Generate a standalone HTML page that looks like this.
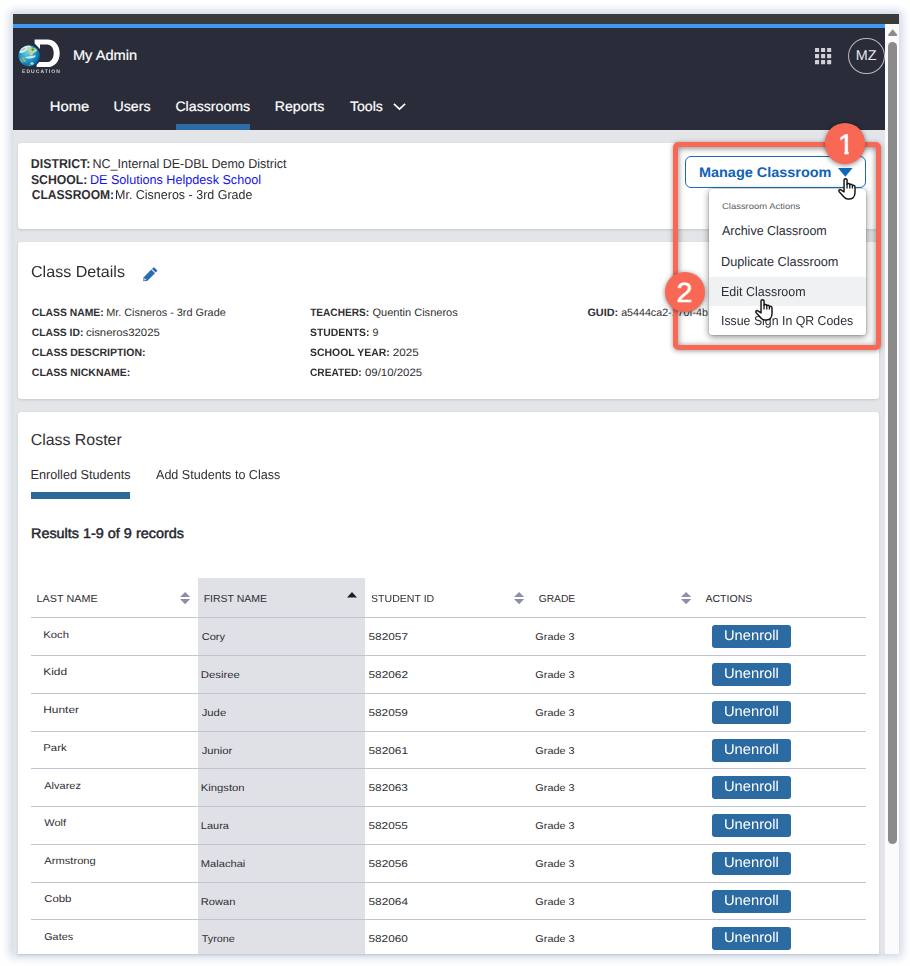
<!DOCTYPE html>
<html lang="en">
<head>
<meta charset="utf-8">
<title>My Admin - Classrooms</title>
<style>
*{box-sizing:border-box;margin:0;padding:0}
html,body{width:910px;height:966px;overflow:hidden;background:#fff}
body{position:relative;font-family:"Liberation Sans",Arial,sans-serif;color:#2f2f33}
.abs,.t,.layer{position:absolute}
.layer{left:0;top:0}
.t{white-space:pre;line-height:1;text-rendering:geometricPrecision;transform-origin:0 0;font-weight:400;text-decoration:none;font-style:normal;list-style:none;display:block}
#frame{position:absolute;left:13px;top:14px;width:886px;height:940px;background:#e3e5e9;box-shadow:0 0 9px 3px rgba(160,178,208,.55)}
#topbar{position:absolute;left:13px;top:14px;width:886px;height:10px;background:#3a3a3a}
#loader{position:absolute;left:13px;top:24px;width:872px;height:4px;background:#3d9af3}
#nav{position:absolute;left:13px;top:28px;width:872px;height:102px;background:#2a2d39}
#track{position:absolute;left:885px;top:24px;width:14px;height:930px;background:#fbfbfb}
#thumb{position:absolute;left:888px;top:42px;width:9px;height:802px;border-radius:4.5px;background:#8b8b8b}
.card{position:absolute;left:18px;width:861px;background:#fff;border-radius:3px;box-shadow:0 1px 3px rgba(0,0,0,.13)}
#active{position:absolute;left:176px;top:124px;width:74px;height:6px;background:#2d6ca5}
#avatar{position:absolute;left:847.8px;top:37.8px;width:37px;height:36.6px;border-radius:50%;border:1.1px solid #b9bac2}
#tabline{position:absolute;left:31px;top:491.6px;width:99.2px;height:7.4px;background:#2c689c}
#hl{position:absolute;left:198px;top:578px;width:167px;height:376px;background:#e0e1e7}
.line{position:absolute;left:31px;width:835px;height:1px;background:#c3c4d2}
.btn{position:absolute;left:711.7px;width:79.3px;height:23px;border-radius:3px;background:#2c6aa2}
#manage{position:absolute;left:685px;top:156px;width:181px;height:32px;border:1.3px solid #1b6cb8;border-radius:6px;background:#fff}
#menu{position:absolute;left:709px;top:189px;width:157px;height:146px;background:#fff;border-radius:3px;box-shadow:0 2px 7px rgba(0,0,0,.45), 0 0 0 .5px rgba(120,120,150,.3)}
#menuhl{position:absolute;left:709px;top:277.3px;width:157px;height:28.3px;background:#f0f1f3}
#redbox{position:absolute;left:673.1px;top:142px;width:208px;height:207.7px;border:5.2px solid #f96855;border-radius:5px;box-shadow:0 1px 5px rgba(0,0,0,.38), inset 0 1px 6px rgba(0,0,0,.5)}
.badge{position:absolute;width:40.4px;height:40.2px;border-radius:50%;background:#f96855;box-shadow:0 1px 5px rgba(0,0,0,.5)}
.num{color:#fff;-webkit-text-stroke:0.5px #fff}
.w{-webkit-text-stroke:0.2px #fff}
.sb{-webkit-text-stroke:0.45px #23242c}
svg{position:absolute;overflow:visible}
</style>
</head>
<body>
<div id="frame"></div>
<div id="topbar"></div>
<div id="loader"></div>
<header class="layer">
<div id="nav"></div>
<svg id="logo" style="left:14px;top:34px" width="52" height="46" viewBox="14 34 52 46">
<defs>
<radialGradient id="gl" cx="0.40" cy="0.36" r="0.68">
<stop offset="0" stop-color="#6fcdea"/><stop offset="0.45" stop-color="#239fd3"/><stop offset="0.8" stop-color="#0f78b4"/><stop offset="1" stop-color="#0a4f8a"/>
</radialGradient>
<clipPath id="gc"><circle cx="29.15" cy="55.85" r="10.65"/></clipPath>
<filter id="gb" x="-20%" y="-20%" width="140%" height="140%"><feGaussianBlur stdDeviation="0.55"/></filter>
</defs>
<path d="M34.6 39.4 H47.5 C54.8 39.4 59.7 45.3 59.7 53.2 C59.7 61.2 54.8 67.1 47.5 67.1 H36.6 V62 H47 C51.2 62 53.7 58.2 53.7 53.2 C53.7 48.3 51.2 44.6 47 44.6 H40 V49 L34.6 43.5 Z" fill="#fff"/>
<circle cx="29.15" cy="55.85" r="11.7" fill="#2a2d39"/>
<circle cx="29.15" cy="55.85" r="10.65" fill="url(#gl)"/>
<g clip-path="url(#gc)" filter="url(#gb)">
<path d="M19 52.5 C20 48.5 23.5 46.2 27.5 45.6 C29.5 45.4 31 46 31.5 47 C29 48.5 27 50.5 24.5 52 C22.5 53 20.5 53.3 19 52.5 Z" fill="#e4f3f7" opacity=".9"/>
<path d="M27.5 47.5 C29.5 46.6 32 46.8 33.5 48 C35.3 48.2 36.8 49.3 37.2 50.8 C36 52 34.3 52.6 33.2 53.8 C32.6 55 31.4 56 30 55.6 C29.2 54.4 29.6 53 28.6 52 C27.6 51 26.6 49 27.5 47.5 Z" fill="#bcd79c"/>
<ellipse cx="32.7" cy="49.6" rx="1.3" ry="1.1" fill="#2f8a4a"/>
<path d="M21.5 50.2 C22.8 48.6 24.6 48 26 48.3 C25 49.6 23.4 50.6 21.8 51 Z" fill="#9cc67e" opacity=".85"/>
<path d="M24.5 57.6 C27.5 56.2 31.5 56.2 35.5 55.2 C36.2 56.4 34.5 57.6 32 58.2 C29.5 58.8 26.5 58.8 24.5 57.6 Z" fill="#e6f4fa" opacity=".85"/>
<path d="M21.8 56.6 C23.6 57 25.4 59 26.3 61.6 C25.6 62.6 24 62.3 22.8 60.8 C21.8 59.6 21.2 57.8 21.8 56.6 Z" fill="#8fb666"/>
<path d="M20.6 58.5 C21.4 60.5 22.6 62.2 24 63 C22.6 63 21 61.6 20.2 59.8 Z" fill="#d8ecf0" opacity=".8"/>
<ellipse cx="32" cy="63.6" rx="1.7" ry="1.3" fill="#d6efe6" opacity=".85"/>
<ellipse cx="29.6" cy="65.3" rx="1.6" ry=".8" fill="#6faa6a" opacity=".8"/>
</g>
</svg>
<span class="t" style="left:21px;top:70px;font-size:5.0px;font-weight:700;transform:translateX(1.0px);letter-spacing:1.06px;color:#d2d3d8;will-change:transform;">EDUCATION</span>
<div class="t w" style="left:72px;top:48px;font-size:14.0px;transform:translateX(0.89px) scaleX(1.044);color:#fff;">My Admin</div>
<svg id="apps" style="left:814.9px;top:47.9px" width="16.4" height="16.4" viewBox="0 0 16.4 16.4" fill="#d0d1d8"><rect x="0.00" y="0.00" width="4.1" height="4.1" rx=".3"/><rect x="6.05" y="0.00" width="4.1" height="4.1" rx=".3"/><rect x="12.10" y="0.00" width="4.1" height="4.1" rx=".3"/><rect x="0.00" y="6.05" width="4.1" height="4.1" rx=".3"/><rect x="6.05" y="6.05" width="4.1" height="4.1" rx=".3"/><rect x="12.10" y="6.05" width="4.1" height="4.1" rx=".3"/><rect x="0.00" y="12.10" width="4.1" height="4.1" rx=".3"/><rect x="6.05" y="12.10" width="4.1" height="4.1" rx=".3"/><rect x="12.10" y="12.10" width="4.1" height="4.1" rx=".3"/></svg>
<div id="avatar"></div><span class="t" style="left:855px;top:49px;font-size:14.3px;transform:translateX(0.83px) scaleX(1.006);color:#e8e8ee;">MZ</span>
<nav class="layer">
<a class="t w" style="left:49px;top:100px;font-size:13.7px;transform:translateX(0.79px) scaleX(1.08);color:#fff;">Home</a>
<a class="t w" style="left:113px;top:100px;font-size:13.7px;transform:translateX(0.53px) scaleX(1.035);color:#fff;">Users</a>
<a class="t w" style="left:175px;top:100px;font-size:13.7px;transform:translateX(0.38px) scaleX(1.035);color:#fff;">Classrooms</a>
<a class="t w" style="left:274px;top:100px;font-size:13.7px;transform:translateX(0.7px) scaleX(1.037);color:#fff;">Reports</a>
<a class="t w" style="left:349px;top:100px;font-size:13.7px;transform:translateX(0.94px) scaleX(1.032);color:#fff;">Tools</a>
<svg style="left:393px;top:103.2px" width="13" height="7.4" viewBox="0 0 13 7.4"><path d="M0.9 0.9 L6.5 6.2 L12.1 0.9" fill="none" stroke="#fff" stroke-width="1.7"/></svg>
<div id="active"></div>
</nav>
</header>
<main class="layer">
<section class="card" style="top:143px;height:86px"></section>
<section class="layer">
<b class="t" style="left:30px;top:158px;font-size:12.9px;font-weight:700;transform:translateX(0.87px) scaleX(0.955);color:#2f2f33;">DISTRICT:</b>
<span class="t" style="left:92px;top:158px;font-size:12.9px;transform:translateX(0.51px) scaleX(0.969);color:#2f2f33;">NC_Internal DE-DBL Demo District</span>
<b class="t" style="left:30px;top:174px;font-size:12.9px;font-weight:700;transform:translateX(0.88px) scaleX(0.95);color:#2f2f33;">SCHOOL:</b>
<a class="t" style="left:89px;top:174px;font-size:12.9px;transform:translateX(0.88px) scaleX(0.979);color:#1414e6;">DE Solutions Helpdesk School</a>
<b class="t" style="left:31px;top:189px;font-size:12.9px;font-weight:700;transform:translateX(0.78px) scaleX(0.935);color:#2f2f33;">CLASSROOM:</b>
<span class="t" style="left:115px;top:189px;font-size:12.9px;transform:scaleX(0.969);color:#2f2f33;">Mr. Cisneros - 3rd Grade</span>
<button id="manage" type="button"></button>
<span class="t" style="left:698px;top:165px;font-size:14.0px;font-weight:700;transform:translateX(0.97px) scaleX(1.032);color:#0f62b4;">Manage Classroom</span>
<svg style="left:837.9px;top:168.2px" width="14.6" height="8.8" viewBox="0 0 14.6 8.8"><path d="M0 0 H14.6 L7.3 8.8 Z" fill="#1168c0"/></svg>
</section>
<section class="card" style="top:242px;height:156.5px"></section>
<section class="layer">
<h2 class="t" style="left:31px;top:265px;font-size:15.9px;transform:scaleX(1.013);color:#2f2f33;">Class Details</h2>
<svg style="left:142.6px;top:266.8px" width="14.6" height="14.6" viewBox="0 0 14.6 14.6">
<path d="M0.3 14.3 L0.5 10.4 L8.3 2.6 L12.0 6.3 L4.2 14.1 Z" fill="#2b6cb0"/>
<path d="M9.0 1.9 L10.5 0.4 Q10.9 0 11.3 0.4 L14.2 3.3 Q14.5 3.7 14.2 4.1 L12.7 5.6 Z" fill="#2b6cb0"/>
<path d="M1.5 11.0 L3.6 13.1 L1.1 13.6 Z" fill="#d5e3f2"/>
</svg>
<b class="t" style="left:31px;top:308px;font-size:10.7px;font-weight:700;transform:translateX(0.81px) scaleX(0.969);color:#2f2f33;">CLASS NAME:</b>
<span class="t" style="left:106px;top:308px;font-size:10.7px;transform:translateX(0.13px) scaleX(1.017);color:#2f2f33;">Mr. Cisneros - 3rd Grade</span>
<b class="t" style="left:31px;top:328px;font-size:10.7px;font-weight:700;transform:translateX(0.81px) scaleX(0.964);color:#2f2f33;">CLASS ID:</b>
<span class="t" style="left:85px;top:328px;font-size:10.7px;transform:translateX(0.95px) scaleX(1.062);color:#2f2f33;">cisneros32025</span>
<b class="t" style="left:31px;top:348px;font-size:10.7px;font-weight:700;transform:translateX(0.81px) scaleX(0.982);color:#2f2f33;">CLASS DESCRIPTION:</b>
<b class="t" style="left:31px;top:368px;font-size:10.7px;font-weight:700;transform:translateX(0.81px) scaleX(0.981);color:#2f2f33;">CLASS NICKNAME:</b>
<b class="t" style="left:310px;top:308px;font-size:10.7px;font-weight:700;transform:translateX(0.17px) scaleX(0.944);color:#2f2f33;">TEACHERS:</b>
<span class="t" style="left:372px;top:308px;font-size:10.7px;transform:translateX(0.39px) scaleX(1.034);color:#2f2f33;">Quentin Cisneros</span>
<b class="t" style="left:310px;top:328px;font-size:10.7px;font-weight:700;transform:scaleX(0.973);color:#2f2f33;">STUDENTS:</b>
<span class="t" style="left:372px;top:328px;font-size:10.7px;transform:translateX(0.39px);color:#2f2f33;">9</span>
<b class="t" style="left:310px;top:348px;font-size:10.7px;font-weight:700;transform:scaleX(0.978);color:#2f2f33;">SCHOOL YEAR:</b>
<span class="t" style="left:392px;top:348px;font-size:10.7px;transform:translateX(0.85px) scaleX(1.093);color:#2f2f33;">2025</span>
<b class="t" style="left:310px;top:368px;font-size:10.7px;font-weight:700;transform:scaleX(0.95);color:#2f2f33;">CREATED:</b>
<span class="t" style="left:364px;top:368px;font-size:10.7px;transform:translateX(0.92px) scaleX(1.07);color:#2f2f33;">09/10/2025</span>
<b class="t" style="left:587px;top:308px;font-size:10.7px;font-weight:700;transform:translateX(0.4px) scaleX(1.018);color:#2f2f33;">GUID:</b>
<span class="t" style="left:621px;top:308px;font-size:10.7px;transform:translateX(0.13px);color:#2f2f33;">a5444ca2-170f-4b</span>
</section>
<section class="card" style="top:412px;height:542px;border-radius:3px 3px 0 0"></section>
<section class="layer">
<h2 class="t" style="left:30px;top:433px;font-size:15.9px;transform:translateX(0.72px);color:#2f2f33;">Class Roster</h2>
<a class="t" style="left:30px;top:468px;font-size:13.0px;transform:translateX(0.49px) scaleX(0.975);color:#2f2f33;">Enrolled Students</a>
<a class="t" style="left:156px;top:468px;font-size:13.0px;transform:scaleX(0.966);color:#2f2f33;">Add Students to Class</a>
<div id="tabline"></div>
<div class="t sb" style="left:30px;top:526px;font-size:14.0px;transform:translateX(0.99px) scaleX(1.029);color:#23242c;">Results 1-9 of 9 records</div>
<div id="hl"></div>
<div class="layer" role="table">
<div class="layer" role="row">
<div class="t" style="left:36px;top:595px;font-size:10.2px;transform:translateX(0.59px) scaleX(1.06);color:#2f2f33;">LAST NAME</div>
<div class="t" style="left:203px;top:595px;font-size:10.2px;transform:translateX(0.72px) scaleX(1.029);color:#2f2f33;">FIRST NAME</div>
<div class="t" style="left:371px;top:595px;font-size:10.2px;transform:scaleX(1.037);color:#2f2f33;">STUDENT ID</div>
<div class="t" style="left:538px;top:595px;font-size:10.2px;transform:translateX(0.7px) scaleX(1.007);color:#2f2f33;">GRADE</div>
<div class="t" style="left:705px;top:595px;font-size:10.2px;transform:translateX(0.42px) scaleX(1.037);color:#2f2f33;">ACTIONS</div>
<svg style="left:180.1px;top:591.9px" width="10.2" height="12.2" viewBox="0 0 10.2 12.2" fill="#8d8fa8"><path d="M5.1 0 L10.2 5 H0 Z"/><path d="M0 7 H10.2 L5.1 12.2 Z"/></svg>
<svg style="left:513.9px;top:591.9px" width="10.2" height="12.2" viewBox="0 0 10.2 12.2" fill="#8d8fa8"><path d="M5.1 0 L10.2 5 H0 Z"/><path d="M0 7 H10.2 L5.1 12.2 Z"/></svg>
<svg style="left:681.1999999999999px;top:591.9px" width="10.2" height="12.2" viewBox="0 0 10.2 12.2" fill="#8d8fa8"><path d="M5.1 0 L10.2 5 H0 Z"/><path d="M0 7 H10.2 L5.1 12.2 Z"/></svg>
<svg style="left:347.2px;top:592.1px" width="10" height="5.4" viewBox="0 0 10 5.4"><path d="M5 0 L10 5.4 H0 Z" fill="#1c1c24"/></svg>
</div>
<div class="line" style="top:617px"></div>
<div class="layer" role="row">
<div class="t" style="left:43px;top:631px;font-size:9.9px;transform:translateX(0.28px) scaleX(1.14);color:#2f2f33;">Koch</div>
<div class="t" style="left:201px;top:633px;font-size:9.9px;transform:translateX(0.66px) scaleX(1.126);color:#2f2f33;">Cory</div>
<div class="t" style="left:368px;top:633px;font-size:9.9px;transform:translateX(0.49px) scaleX(1.198);color:#2f2f33;">582057</div>
<div class="t" style="left:535px;top:633px;font-size:9.9px;transform:translateX(0.37px) scaleX(1.101);color:#2f2f33;">Grade 3</div>
<div class="btn" style="top:625px"></div><span class="t" style="left:724px;top:629px;font-size:14.3px;transform:scaleX(1.029);color:#fff;">Unenroll</span>
<div class="line" style="top:655px"></div>
</div>
<div class="layer" role="row">
<div class="t" style="left:43px;top:668px;font-size:9.9px;transform:translateX(0.21px) scaleX(1.207);color:#2f2f33;">Kidd</div>
<div class="t" style="left:200px;top:671px;font-size:9.9px;transform:translateX(0.8px) scaleX(1.148);color:#2f2f33;">Desiree</div>
<div class="t" style="left:368px;top:671px;font-size:9.9px;transform:translateX(0.49px) scaleX(1.199);color:#2f2f33;">582062</div>
<div class="t" style="left:535px;top:671px;font-size:9.9px;transform:translateX(0.37px) scaleX(1.101);color:#2f2f33;">Grade 3</div>
<div class="btn" style="top:663px"></div><span class="t" style="left:724px;top:667px;font-size:14.3px;transform:scaleX(1.029);color:#fff;">Unenroll</span>
<div class="line" style="top:693px"></div>
</div>
<div class="layer" role="row">
<div class="t" style="left:43px;top:706px;font-size:9.9px;transform:translateX(0.24px) scaleX(1.206);color:#2f2f33;">Hunter</div>
<div class="t" style="left:201px;top:709px;font-size:9.9px;transform:translateX(0.67px) scaleX(1.144);color:#2f2f33;">Jude</div>
<div class="t" style="left:368px;top:709px;font-size:9.9px;transform:translateX(0.49px) scaleX(1.195);color:#2f2f33;">582059</div>
<div class="t" style="left:535px;top:709px;font-size:9.9px;transform:translateX(0.37px) scaleX(1.101);color:#2f2f33;">Grade 3</div>
<div class="btn" style="top:701px"></div><span class="t" style="left:724px;top:705px;font-size:14.3px;transform:scaleX(1.029);color:#fff;">Unenroll</span>
<div class="line" style="top:731px"></div>
</div>
<div class="layer" role="row">
<div class="t" style="left:43px;top:744px;font-size:9.9px;transform:translateX(0.27px) scaleX(1.152);color:#2f2f33;">Park</div>
<div class="t" style="left:201px;top:747px;font-size:9.9px;transform:translateX(0.67px) scaleX(1.14);color:#2f2f33;">Junior</div>
<div class="t" style="left:368px;top:747px;font-size:9.9px;transform:translateX(0.49px) scaleX(1.2);color:#2f2f33;">582061</div>
<div class="t" style="left:535px;top:747px;font-size:9.9px;transform:translateX(0.37px) scaleX(1.101);color:#2f2f33;">Grade 3</div>
<div class="btn" style="top:739px"></div><span class="t" style="left:724px;top:743px;font-size:14.3px;transform:scaleX(1.029);color:#fff;">Unenroll</span>
<div class="line" style="top:768px"></div>
</div>
<div class="layer" role="row">
<div class="t" style="left:44px;top:782px;font-size:9.9px;transform:translateX(0.29px) scaleX(1.111);color:#2f2f33;">Alvarez</div>
<div class="t" style="left:200px;top:784px;font-size:9.9px;transform:translateX(0.78px) scaleX(1.141);color:#2f2f33;">Kingston</div>
<div class="t" style="left:368px;top:784px;font-size:9.9px;transform:translateX(0.49px) scaleX(1.197);color:#2f2f33;">582063</div>
<div class="t" style="left:535px;top:784px;font-size:9.9px;transform:translateX(0.37px) scaleX(1.101);color:#2f2f33;">Grade 3</div>
<div class="btn" style="top:776px"></div><span class="t" style="left:724px;top:780px;font-size:14.3px;transform:scaleX(1.029);color:#fff;">Unenroll</span>
<div class="line" style="top:806px"></div>
</div>
<div class="layer" role="row">
<div class="t" style="left:44px;top:819px;font-size:9.9px;transform:translateX(0.23px) scaleX(1.111);color:#2f2f33;">Wolf</div>
<div class="t" style="left:200px;top:822px;font-size:9.9px;transform:translateX(0.84px) scaleX(1.112);color:#2f2f33;">Laura</div>
<div class="t" style="left:368px;top:822px;font-size:9.9px;transform:translateX(0.49px) scaleX(1.195);color:#2f2f33;">582055</div>
<div class="t" style="left:535px;top:822px;font-size:9.9px;transform:translateX(0.37px) scaleX(1.101);color:#2f2f33;">Grade 3</div>
<div class="btn" style="top:814px"></div><span class="t" style="left:724px;top:818px;font-size:14.3px;transform:scaleX(1.029);color:#fff;">Unenroll</span>
<div class="line" style="top:844px"></div>
</div>
<div class="layer" role="row">
<div class="t" style="left:44px;top:857px;font-size:9.9px;transform:translateX(0.29px) scaleX(1.13);color:#2f2f33;">Armstrong</div>
<div class="t" style="left:200px;top:860px;font-size:9.9px;transform:translateX(0.82px) scaleX(1.125);color:#2f2f33;">Malachai</div>
<div class="t" style="left:368px;top:860px;font-size:9.9px;transform:translateX(0.49px) scaleX(1.197);color:#2f2f33;">582056</div>
<div class="t" style="left:535px;top:860px;font-size:9.9px;transform:translateX(0.37px) scaleX(1.101);color:#2f2f33;">Grade 3</div>
<div class="btn" style="top:852px"></div><span class="t" style="left:724px;top:856px;font-size:14.3px;transform:scaleX(1.029);color:#fff;">Unenroll</span>
<div class="line" style="top:882px"></div>
</div>
<div class="layer" role="row">
<div class="t" style="left:44px;top:895px;font-size:9.9px;transform:translateX(0.15px) scaleX(1.155);color:#2f2f33;">Cobb</div>
<div class="t" style="left:200px;top:898px;font-size:9.9px;transform:translateX(0.82px) scaleX(1.128);color:#2f2f33;">Rowan</div>
<div class="t" style="left:368px;top:898px;font-size:9.9px;transform:translateX(0.49px) scaleX(1.199);color:#2f2f33;">582064</div>
<div class="t" style="left:535px;top:898px;font-size:9.9px;transform:translateX(0.37px) scaleX(1.101);color:#2f2f33;">Grade 3</div>
<div class="btn" style="top:890px"></div><span class="t" style="left:724px;top:894px;font-size:14.3px;transform:scaleX(1.029);color:#fff;">Unenroll</span>
<div class="line" style="top:919px"></div>
</div>
<div class="layer" role="row">
<div class="t" style="left:44px;top:933px;font-size:9.9px;transform:translateX(0.17px) scaleX(1.098);color:#2f2f33;">Gates</div>
<div class="t" style="left:201px;top:935px;font-size:9.9px;transform:translateX(0.78px) scaleX(1.097);color:#2f2f33;">Tyrone</div>
<div class="t" style="left:368px;top:935px;font-size:9.9px;transform:translateX(0.49px) scaleX(1.195);color:#2f2f33;">582060</div>
<div class="t" style="left:535px;top:935px;font-size:9.9px;transform:translateX(0.37px) scaleX(1.101);color:#2f2f33;">Grade 3</div>
<div class="btn" style="top:927px"></div><span class="t" style="left:724px;top:931px;font-size:14.3px;transform:scaleX(1.029);color:#fff;">Unenroll</span>
</div>
</div>
</section>
</main>
<ul id="menu"></ul><div id="menuhl"></div>
<ul class="layer">
<li class="t" style="left:721px;top:202px;font-size:8.4px;transform:translateX(1.0px) scaleX(1.127);color:#5a5d66;">Classroom Actions</li>
<li class="t" style="left:721px;top:224px;font-size:13px;transform:translateX(0.93px) scaleX(0.961);color:#2b2e38;">Archive Classroom</li>
<li class="t" style="left:720px;top:255px;font-size:13px;transform:translateX(0.98px) scaleX(0.979);color:#2b2e38;">Duplicate Classroom</li>
<li class="t" style="left:721px;top:285px;font-size:13px;transform:scaleX(0.96);color:#2b2e38;">Edit Classroom</li>
<li class="t" style="left:721px;top:314px;font-size:13px;transform:scaleX(0.948);color:#2b2e38;">Issue Sign In QR Codes</li>
</ul>
<div id="track"></div><div id="thumb"></div>
<svg style="left:888px;top:29px" width="9.4" height="7" viewBox="0 0 9.4 7"><path d="M4.7 0.3 L9.1 5.6 Q9.4 6.8 8.4 6.9 H1 Q0 6.8 0.3 5.6 Z" fill="#8b8b8b"/></svg>
<div id="redbox"></div>
<div class="badge" style="left:824.8px;top:123.4px"></div><span class="t num" style="left:838px;top:131px;font-size:28.5px;clip-path:polygon(0 0,10.6px 0,10.6px 30px,6.4px 30px,6.4px 19px,0 19px)">1</span>
<div class="badge" style="left:664.7px;top:271.8px"></div><span class="t num" style="left:676px;top:279px;font-size:27.6px;transform:translateX(0.5px) scaleX(1.045)">2</span>
<svg style="left:838.3px;top:178px" width="18" height="22" viewBox="0 0 17.6 22"><path d="M5.85 13.2 V1.9 C5.85 0.35 8.85 0.35 8.85 1.9 V6.2 C9.3 5.0 11.4 5.2 11.6 6.7 C12.1 5.9 14.0 6.2 14.2 7.6 C14.9 7.0 16.8 7.4 16.8 9.0 V14.5 C16.8 18.5 14.5 20.9 11.5 20.9 H9.6 C8.1 20.9 7.0 20.3 6.0 19.2 L1.0 13.7 C0.0 12.4 1.3 11.0 2.7 11.8 L5.85 13.9" fill="#fff" stroke="#141414" stroke-width="1.45" stroke-linejoin="round" stroke-linecap="round"/><path d="M8.85 6 V10.6 M11.6 6.9 V10.6 M14.2 7.9 V10.6" fill="none" stroke="#141414" stroke-width="1.3"/></svg>
<svg style="left:755.2px;top:299px" width="18" height="22" viewBox="0 0 17.6 22"><path d="M5.85 13.2 V1.9 C5.85 0.35 8.85 0.35 8.85 1.9 V6.2 C9.3 5.0 11.4 5.2 11.6 6.7 C12.1 5.9 14.0 6.2 14.2 7.6 C14.9 7.0 16.8 7.4 16.8 9.0 V14.5 C16.8 18.5 14.5 20.9 11.5 20.9 H9.6 C8.1 20.9 7.0 20.3 6.0 19.2 L1.0 13.7 C0.0 12.4 1.3 11.0 2.7 11.8 L5.85 13.9" fill="#fff" stroke="#141414" stroke-width="1.45" stroke-linejoin="round" stroke-linecap="round"/><path d="M8.85 6 V10.6 M11.6 6.9 V10.6 M14.2 7.9 V10.6" fill="none" stroke="#141414" stroke-width="1.3"/></svg>
</body>
</html>
